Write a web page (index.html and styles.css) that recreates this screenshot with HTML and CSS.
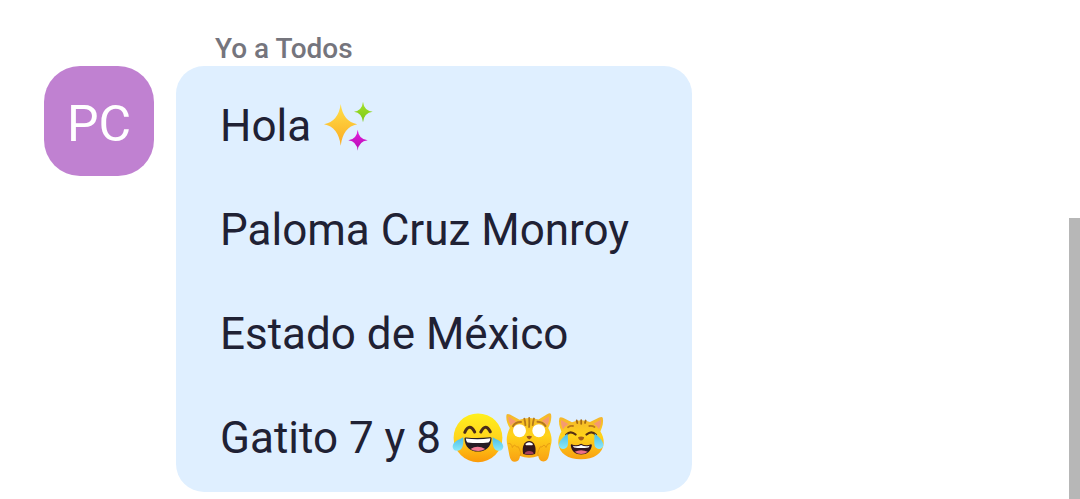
FILE: index.html
```html
<!DOCTYPE html>
<html lang="es">
<head>
<meta charset="utf-8">
<meta name="viewport" content="width=device-width, initial-scale=1">
<title>Chat</title>
<link rel="stylesheet" href="styles.css">
</head>
<body>
<svg class="defs" aria-hidden="true">
  <defs>
    <linearGradient id="face" x1="0" y1="0" x2="0" y2="1"><stop offset="0" stop-color="#fff01e"/><stop offset=".5" stop-color="#ffd51c"/><stop offset="1" stop-color="#fb9a09"/></linearGradient>
    <linearGradient id="cat" x1="0" y1="0" x2="0" y2="1"><stop offset="0" stop-color="#f3b52e"/><stop offset=".45" stop-color="#ffd319"/><stop offset="1" stop-color="#f9a012"/></linearGradient>
    <linearGradient id="tear" x1="0" y1="0" x2="0" y2="1"><stop offset="0" stop-color="#4dbde5"/><stop offset="1" stop-color="#8be9fb"/></linearGradient>
    <linearGradient id="gold" x1="0" y1="0" x2="0" y2="1"><stop offset="0" stop-color="#ffe04a"/><stop offset="1" stop-color="#fbab22"/></linearGradient>
    <linearGradient id="green" x1="0" y1="0" x2="0" y2="1"><stop offset="0" stop-color="#a8e12d"/><stop offset="1" stop-color="#78c814"/></linearGradient>
    <linearGradient id="violet" x1="0" y1="0" x2="0" y2="1"><stop offset="0" stop-color="#e41fdf"/><stop offset="1" stop-color="#b50cb0"/></linearGradient>
  </defs>
</svg>
<div class="chat">
  <main class="messages">
    <article class="message">
      <div class="avatar">PC</div>
      <div class="content">
        <header class="sender">Yo a Todos</header>
        <div class="bubble">
          <p>Hola <svg class="emoji" viewBox="0 0 52 52" role="img" aria-label="Destellos">
            <path fill="url(#gold)" d="M18.7 4Q21 21.5 35.3 24.3Q21 27 18.7 45.7Q16.4 27 2 24.3Q16.4 21.5 18.7 4Z"/>
            <path fill="url(#green)" d="M41 1.7Q41.9 10.6 50.7 11.7Q41.9 12.8 41 22.3Q40.1 12.8 32 11.7Q40.1 10.6 41 1.7Z"/>
            <path fill="url(#violet)" d="M35.7 29.7Q36.6 39.2 45.7 40.3Q36.6 41.4 35.7 50.7Q34.8 41.4 26.3 40.3Q34.8 39.2 35.7 29.7Z"/>
          </svg></p>
          <p>Paloma Cruz Monroy</p>
          <p>Estado de México</p>
          <p>Gatito 7 y 8 <svg class="emoji" viewBox="0 0 52 52" role="img" aria-label="Cara llorando de risa">
            <circle cx="26" cy="25.8" r="24.4" fill="url(#face)"/>
            <path d="M12.8 20.3Q17.5 10.5 22.7 20M28.8 20Q33.5 10.5 38.3 19.8" fill="none" stroke="#4a2c1a" stroke-width="3" stroke-linecap="round"/>
            <path d="M12.5 26.5Q12.5 25.3 14 25.4Q26 26.5 38 25.2Q39.6 25 39.6 26.5C39.2 35 33.5 39.6 26 39.6S12.8 35 12.5 26.5Z" fill="#261d26"/>
            <path d="M13.8 26.5Q26 28 38.4 26.3Q38.3 29.3 36.5 30.5Q26 31.6 15.5 30.5Q14 29 13.8 26.5Z" fill="#fff"/>
            <path d="M18.5 37Q25.5 32.5 33.2 37Q30 39.2 26 39.1Q21 39 18.5 37Z" fill="#f27b95"/>
            <path d="M11.2 25.2C12 33 10.3 38.8 5.3 38.8C1.8 38.8.5 36.5.7 34C1.1 30 6.5 27.8 11.2 25.2ZM40.7 25.2C40 33 41.6 38.8 46.6 38.8C50.1 38.8 51.4 36.5 51.2 34C50.8 30 45.4 27.8 40.7 25.2Z" fill="url(#tear)"/>
          </svg><svg class="emoji" viewBox="0 0 52 52" role="img" aria-label="Gato asustado">
            <path d="M2.6 2.5Q3.5 1.3 6 2.6L15.5 7.8Q25 4.2 34.5 7.5L43.5 2Q46.4 .6 47 2.3C48 6.5 46.4 12 44.2 16C47.5 22 48.6 28 46.6 34L45 43Q43.8 49.7 39.2 49.5Q35 49.2 34.3 44Q25 47.6 16 44Q15.5 49.5 11 49.8Q6.5 49.9 5.4 43.5L3.6 34C1.8 28 2.8 22 5.8 16C3.2 12 1.6 6.5 2.6 2.5Z" fill="url(#cat)"/>
            <path d="M4.3 4.6L12.3 9.5Q8.6 11.3 6.8 14Q4 9 4.3 4.6ZM45.2 4.2L37.8 9Q41.5 11 43.3 13.8Q45.8 9 45.2 4.2Z" fill="#f59a70"/>
            <path d="M20.3 6.6Q21.2 10 21.4 13.2M25.2 6Q25.5 11 25.1 15M30 6.5Q29 10 28.7 13.2" stroke="#b57a1a" stroke-width="1.8" fill="none" stroke-linecap="round"/>
            <path d="M9 14.2Q11.3 9.8 17 10M33.5 9.8Q39 10 41.5 14" stroke="#b5761d" stroke-width="2" fill="none" stroke-linecap="round"/>
            <circle cx="15.5" cy="18.7" r="6.5" fill="#fff"/><circle cx="34.8" cy="18.7" r="6.5" fill="#fff"/>
            <path d="M22.5 24.3Q25.2 23 28 24.3Q27.3 27.2 25.2 27.4Q23.1 27.2 22.5 24.3Z" fill="#9b5721"/>
            <path d="M19.2 42C17.5 35 20.2 29 25.2 29S32.7 35 31.1 42Q25.2 44 19.2 42Z" fill="#33161c"/>
            <path d="M21.3 32Q25.2 28.6 29 32L28.4 33.2H22Z" fill="#fff"/>
            <path d="M20.6 41.8Q21.3 39 25.2 39T29.8 41.8Q25.2 43.2 20.6 41.8Z" fill="#a8405a"/>
            <path d="M4.3 31.5Q7.5 31 8.4 35.5M8.4 35.5Q10.3 31.2 12.5 35Q14.6 33.3 15.6 37.5Q18 41.5 16 44M46 31.5Q43 31 42 35.5Q40.2 31.2 38 35Q36 33.3 35 37.5Q32.7 41.5 34.3 44" fill="none" stroke="#e89d12" stroke-width="1"/>
          </svg><svg class="emoji" viewBox="0 0 52 52" role="img" aria-label="Gato llorando de risa">
            <path d="M3.4 6Q4.4 4.5 7 5.8L16 10.3Q25 6.2 34 10L43.2 5.6Q46.2 4.4 46.8 6C47.7 10 46.5 14.5 44.4 19.5Q48 25 47.7 31C47 41.5 38 47.3 25 47.3S3 41.5 2.3 31Q2 25 5.4 19.5C3.3 14.5 2.4 10 3.4 6Z" fill="url(#cat)"/>
            <path d="M5 8L12.5 12Q8.6 14.5 7 17.5Q4.5 12 5 8ZM45.2 7.5L37.6 11.8Q41.5 14.3 43 17.3Q45.6 12 45.2 7.5Z" fill="#f59a70"/>
            <path d="M20.7 8.5L21.3 11M25.2 8.2V11.8M29.7 8.5L29 11" stroke="#a66b14" stroke-width="1.8" fill="none" stroke-linecap="round"/>
            <path d="M12 15.2Q14.5 13.5 17 14M33.3 14Q36.5 13.5 38.5 15" stroke="#bb7a1b" stroke-width="1.8" fill="none" stroke-linecap="round"/>
            <path d="M10.2 22.7Q14.5 18 19.6 22.5M30.5 22.5Q35.5 18 40 22.7" stroke="#553014" stroke-width="2.2" fill="none" stroke-linecap="round"/>
            <path d="M22 25.2Q25 23.8 28.2 25.2Q27.7 28.2 25.1 28.4Q22.6 28.2 22 25.2Z" fill="#a8611b"/>
            <path d="M15.5 32.2Q20 34.5 25.1 31.7Q30 34.5 35 32.2Q36 32 35.8 33.7C34.8 39.5 31 42.4 25.2 42.4S15.7 39.5 14.8 33.7Q14.6 32 15.5 32.2Z" fill="#32161f"/>
            <path d="M16.8 33.7Q21 35.3 25.1 33Q29.3 35.3 33.7 33.7L32.5 35.6Q25.2 36.6 18 35.6Z" fill="#fff"/>
            <path d="M18.7 39.8Q25 36.5 31.8 39.8Q29 42 25.2 42T18.7 39.8Z" fill="#ef6f88"/>
            <path d="M11.5 21.5C5.5 26.5 2.6 30 3 33.8C3.6 38 10.6 38.2 11.8 33.2Q12.4 29 11.5 21.5ZM38.8 21.5C44.8 26.5 47.7 30 47.3 33.8C46.7 38 39.7 38.2 38.5 33.2Q37.9 29 38.8 21.5Z" fill="url(#tear)"/>
          </svg></p>
        </div>
      </div>
    </article>
  </main>
  <div class="scrollbar" aria-hidden="true"><div class="thumb"></div></div>
</div>
</body>
</html>
```
FILE: styles.css
```css
* {
  box-sizing: border-box;
}

body {
  margin: 0;
  background: #fff;
  color: #1f2134;
  font-family: Roboto, "Liberation Sans", sans-serif;
}

.defs {
  position: absolute;
  width: 0;
  height: 0;
}

.chat {
  display: flex;
  min-height: 100vh;
}

.messages {
  flex: 1;
  padding: 32px 44px 0;
}

.message {
  display: flex;
  align-items: flex-start;
  gap: 22px;
}

.avatar {
  flex: none;
  width: 110px;
  height: 110px;
  margin-top: 34px;
  padding-top: 28px;
  border-radius: 36px;
  background: #c081d1;
  color: #fff;
  font-size: 50px;
  line-height: 60px;
  text-align: center;
}

.sender {
  padding-left: 39px;
  color: #75757d;
  font-size: 28px;
  font-weight: 500;
  line-height: 34px;
}

.bubble {
  display: flex;
  flex-direction: column;
  gap: 52px;
  width: fit-content;
  padding: 34px 63px 28px 44px;
  border-radius: 28px;
  background: #dfefff;
  font-size: 44px;
  line-height: 52px;
}

.bubble p {
  margin: 0;
}

.emoji {
  width: 52px;
  height: 52px;
  vertical-align: top;
}

.scrollbar {
  display: flex;
  flex-direction: column;
  width: 11px;
  padding-top: 218px;
}

.thumb {
  flex: 1;
  background: #b7b7b7;
}
```
